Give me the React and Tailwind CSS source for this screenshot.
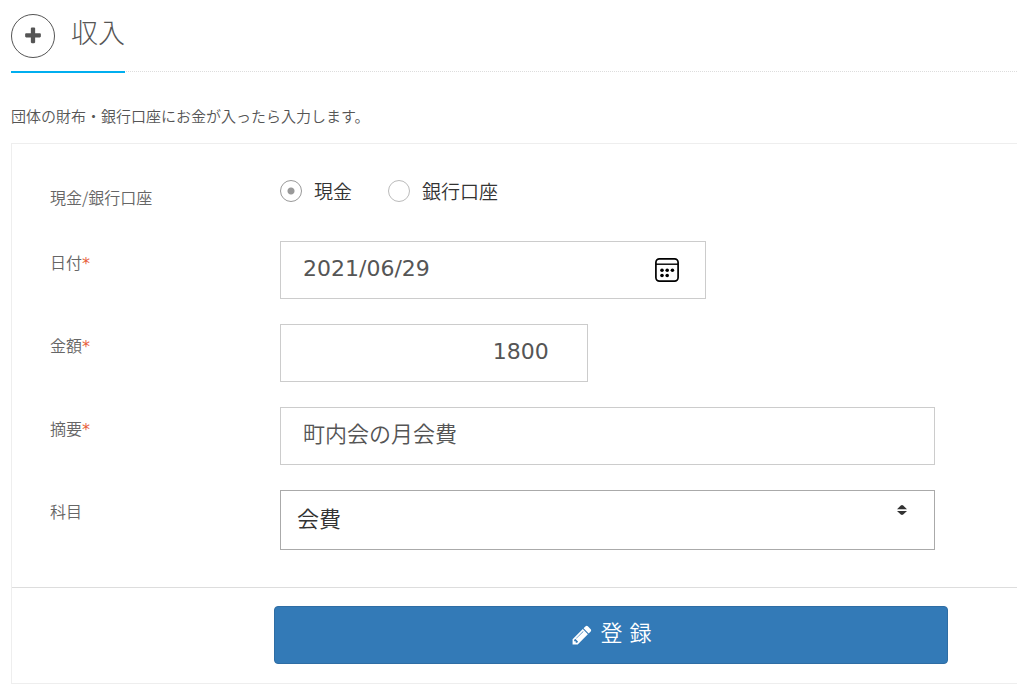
import { useState } from 'react';

const inputClass = 'block h-[58px] border border-[#cccccc] bg-white px-[22px] text-[22px] text-[#555555] outline-none focus:border-[#337ab7]';

function PlusIcon() {
    return (
        <svg viewBox="0 0 1792 1792" className="size-5" fill="currentColor" aria-hidden="true">
            <path d="M1600 736v192q0 40-28 68t-68 28h-416v416q0 40-28 68t-68 28h-192q-40 0-68-28t-28-68v-416h-416q-40 0-68-28t-28-68v-192q0-40 28-68t68-28h416v-416q0-40 28-68t68-28h192q40 0 68 28t28 68v416h416q40 0 68 28t28 68z" />
        </svg>
    );
}

function PencilIcon() {
    return (
        <svg viewBox="0 0 1792 1792" className="size-[22px]" fill="currentColor" aria-hidden="true">
            <path d="M491 1536l91-91-235-235-91 91v107h128v128h107zM1014 608q0-22-22-22-10 0-17 7l-542 542q-7 7-7 17 0 22 22 22 10 0 17-7l542-542q7-7 7-17zM960 416l416 416-832 832h-416v-416zM1643 512q0 53-37 90l-166 166-416-416 166-165q36-38 90-38 53 0 91 38l235 234q37 39 37 91z" />
        </svg>
    );
}

function CalendarIcon() {
    return (
        <svg viewBox="0 0 26 26" className="size-[26px]" fill="none" aria-hidden="true">
            <rect x="1.9" y="1.9" width="22.2" height="22.2" rx="3.5" stroke="#000" strokeWidth="1.7" />
            <path d="M2 7.2h22" stroke="#000" strokeWidth="1.4" />
            <g fill="#000">
                <circle cx="8" cy="13.3" r="1.8" />
                <circle cx="13.2" cy="13.3" r="1.8" />
                <circle cx="18.4" cy="13.3" r="1.8" />
                <circle cx="8" cy="18.5" r="1.8" />
                <circle cx="13.2" cy="18.5" r="1.8" />
            </g>
        </svg>
    );
}

function SortIcon() {
    return (
        <svg viewBox="0 0 10 10" className="size-[10px]" fill="#333" aria-hidden="true">
            <path d="M0 4.2 3.8 0.4q1.2-.8 2.4 0L10 4.2zM0 5.9h10L6.2 9.6q-1.2.8-2.4 0z" />
        </svg>
    );
}

function Row({ label, htmlFor, required, children }) {
    return (
        <div className="grid grid-cols-[230px_1fr]">
            <label htmlFor={htmlFor} className="pt-[9px] text-base leading-6 text-[#666666]">
                {label}
                {required && <span className="font-['DejaVu_Sans',sans-serif] font-normal text-[#e8603c]">*</span>}
            </label>
            {children}
        </div>
    );
}

function Radio({ label, value, checked, onChange }) {
    return (
        <label className="flex items-center gap-3 text-[19px] leading-6 text-[#333333]">
            <input
                type="radio"
                name="account"
                value={value}
                checked={checked}
                onChange={onChange}
                className="size-[22px] appearance-none rounded-full border border-[#bbbbbb] bg-white checked:border-[#999999] checked:bg-[radial-gradient(circle,#999999_3px,transparent_4px)]"
            />
            {label}
        </label>
    );
}

export default function App() {
    const [form, setForm] = useState({
        account: 'cash',
        date: '2021/06/29',
        amount: '1800',
        summary: '町内会の月会費',
        subject: '会費',
    });

    function update(field) {
        return (event) => setForm({ ...form, [field]: event.target.value });
    }

    return (
        <main className="bg-white pl-[11px] pt-[14px] font-['Noto_Sans_CJK_JP',sans-serif] font-[350] text-[#555555]">
            <header className="flex border-b border-dotted border-[#dddddd]">
                <div className="-mb-[2px] flex gap-4 border-b-2 border-[#00aeef] pb-[13px]">
                    <span className="flex size-11 items-center justify-center rounded-full border border-[#555555]">
                        <PlusIcon />
                    </span>
                    <h1 className="text-[27px] leading-9 font-light">収入</h1>
                </div>
            </header>

            <p className="mt-8 text-[15px] leading-6">団体の財布・銀行口座にお金が入ったら入力します。</p>

            <form onSubmit={(event) => event.preventDefault()} className="mt-[15px] border-y border-l border-[#eeeeee]">
                <div className="flex flex-col gap-[25px] pt-[35px] pr-[82px] pb-[37px] pl-[38px]">
                    <fieldset className="grid h-[37px] grid-cols-[230px_1fr]">
                        <legend className="float-left pt-[6px] text-base leading-6 text-[#666666]">現金/銀行口座</legend>
                        <div className="col-start-2 row-start-1 flex items-start gap-9">
                            <Radio label="現金" value="cash" checked={form.account === 'cash'} onChange={update('account')} />
                            <Radio label="銀行口座" value="bank" checked={form.account === 'bank'} onChange={update('account')} />
                        </div>
                    </fieldset>

                    <Row label="日付" htmlFor="date" required>
                        <div className="relative w-[65%]">
                            <input
                                id="date"
                                type="text"
                                className={`${inputClass} w-full pb-1 font-['DejaVu_Sans',sans-serif] font-normal`}
                                value={form.date}
                                onChange={update('date')}
                                required
                            />
                            <button type="button" aria-label="カレンダー" className="absolute inset-y-0 right-[26px] flex items-center">
                                <CalendarIcon />
                            </button>
                        </div>
                    </Row>

                    <Row label="金額" htmlFor="amount" required>
                        <input
                            id="amount"
                            type="text"
                            inputMode="numeric"
                            className={`${inputClass} w-[47%] pr-[38px] pb-1 text-right font-['DejaVu_Sans',sans-serif] font-normal`}
                            value={form.amount}
                            onChange={update('amount')}
                            required
                        />
                    </Row>

                    <Row label="摘要" htmlFor="summary" required>
                        <input
                            id="summary"
                            type="text"
                            className={`${inputClass} w-full pb-2`}
                            value={form.summary}
                            onChange={update('summary')}
                            required
                        />
                    </Row>

                    <Row label="科目" htmlFor="subject">
                        <div className="relative">
                            <select
                                id="subject"
                                className="block h-[60px] w-full appearance-none border border-[#aaaaaa] bg-white px-4 pb-1.5 text-[22px] text-[#333333] outline-none"
                                value={form.subject}
                                onChange={update('subject')}
                            >
                                <option>会費</option>
                            </select>
                            <span className="pointer-events-none absolute top-[15px] right-7">
                                <SortIcon />
                            </span>
                        </div>
                    </Row>
                </div>

                <div className="border-t border-[#dddddd] pt-[18px] pr-[69px] pb-[19px] pl-[262px]">
                    <button
                        type="submit"
                        className="flex h-[58px] w-full items-center justify-center gap-2 rounded border border-[#2e6da4] bg-[#337ab7] font-['DejaVu_Sans','Noto_Sans_CJK_JP',sans-serif] text-[22px] text-white hover:bg-[#286090]"
                    >
                        <PencilIcon />
                        <span className="pb-1">登 録</span>
                    </button>
                </div>
            </form>
        </main>
    );
}
